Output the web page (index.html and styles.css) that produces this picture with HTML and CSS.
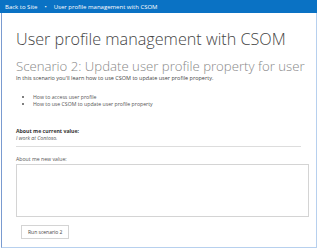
FILE: index.html
```html
<!DOCTYPE html>
<html lang="en">

<head>
    <meta charset="UTF-8">
    <title>User profile management with CSOM</title>
    <link rel="stylesheet" href="styles.css">
</head>

<body>
    <div class="frame">
        <div class="topbar">
            <span>Back to Site</span>
            <span class="dot">&bull;</span>
            <span>User profile management with CSOM</span>
        </div>

        <div class="content">
            <h1>User profile management with CSOM</h1>
            <h2>Scenario 2: Update user profile property for user</h2>
            <p class="intro">In this scenario you'll learn how to use CSOM to update user profile property.</p>
            <ul class="points">
                <li>How to access user profile</li>
                <li>How to use CSOM to update user profile property</li>
            </ul>

            <div class="current">
                <div class="label-bold">About me current value:</div>
                <div class="value">I work at Contoso.</div>
            </div>

            <div class="label">About me new value:</div>
            <textarea class="newvalue"></textarea>

            <button class="run">Run scenario 2</button>
        </div>
    </div>
</body>

</html>
```

FILE: styles.css
```css
body {
    margin: 0;
    font-family: "Open Sans", "Liberation Sans", sans-serif;
    background: #fff;
}

.frame {
    margin-left: 1px;
    width: 316px;
    height: 248px;
    box-sizing: border-box;
    border-left: 1px solid #7a9bd0;
    border-right: 1px solid #b7d0ee;
    border-bottom: 1px solid #b7d0ee;
    display: flex;
    flex-direction: column;
}

.topbar {
    height: 13px;
    background: #0a72c4;
    color: #fff;
    font-size: 6px;
    display: flex;
    align-items: center;
    gap: 7px;
    padding-left: 5px;
    margin-left: -2px;
    margin-right: -1px;
}

.topbar .dot {
    font-size: 6px;
}

.content {
    padding: 0 8px 0 14px;
    color: #444;
}

h1 {
    margin: 15px 0 0;
    font-size: 16.2px;
    font-weight: 300;
    color: #444;
    line-height: 22px;
}

h2 {
    margin: 8px 0 0;
    font-size: 13.2px;
    font-weight: 300;
    color: #888;
    line-height: 16px;
}

.intro {
    margin: 0;
    font-size: 5.5px;
    line-height: 8px;
    color: #444;
}

.points {
    margin: 12px 0 0;
    padding-left: 17px;
    font-size: 5.2px;
    line-height: 7px;
    color: #555;
}

.current {
    margin-top: 20px;
    border-bottom: 1px solid #ddd;
    padding-bottom: 4px;
    margin-right: 7px;
}

.label-bold {
    font-size: 5.2px;
    font-weight: 700;
    line-height: 7px;
    color: #333;
}

.value {
    font-size: 5.2px;
    font-style: italic;
    line-height: 7px;
    color: #555;
}

.label {
    margin-top: 9px;
    font-size: 5.2px;
    line-height: 7px;
    color: #555;
}

.newvalue {
    display: block;
    width: 293px;
    height: 53px;
    box-sizing: border-box;
    border: 1px solid #d4d4d4;
    margin-top: 1px;
    resize: none;
}

.run {
    margin: 8px 0 0 5px;
    height: 14px;
    padding: 0 6px;
    font-family: "Open Sans", "Liberation Sans", sans-serif;
    font-size: 5px;
    color: #444;
    background: #fff;
    border: 1px solid #d4d4d4;
}
```
